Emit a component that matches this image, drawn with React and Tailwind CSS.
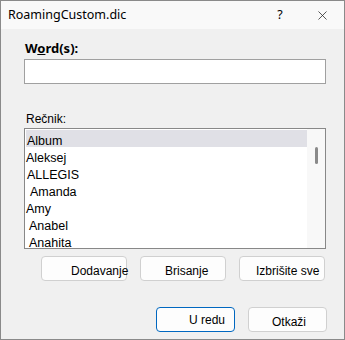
import { X } from 'lucide-react';

const words = [
  { w: 'Album', pl: 'pl-[1px]', sel: true },
  { w: 'Aleksej', pl: 'pl-[0px]' },
  { w: 'ALLEGIS', pl: 'pl-[1px]' },
  { w: 'Amanda', pl: 'pl-[4px]' },
  { w: 'Amy', pl: 'pl-[0px]' },
  { w: 'Anabel', pl: 'pl-[3px]' },
  { w: 'Anahita', pl: 'pl-[3px]' },
];

const arial = { fontFamily: '"Liberation Sans", Arial, sans-serif' };

function Btn({ children, primary, textPl, pt }) {
  return (
    <button
      className={
        'h-[25px] w-[86px] rounded-[4px] bg-[#fdfdfd] text-left text-[12px] leading-[14px] text-black whitespace-nowrap flex items-start ' +
        pt +
        ' ' +
        (primary ? 'border border-[#0067c0]' : 'border border-[#d0d0d0]')
      }
      style={arial}
    >
      <span className={textPl}>{children}</span>
    </button>
  );
}

export default function App() {
  return (
    <div
      className="w-[345px] h-[340px] border border-[#8a8a8a] bg-[#f0f0f0] flex flex-col"
      style={{ fontFamily: '"Segoe UI", "Noto Sans", "Open Sans", sans-serif' }}
    >
      {/* title bar */}
      <div className="h-[28px] bg-[#f9f9f9] flex items-center pl-[7px] text-[12.5px] text-black">
        <span className="flex-1">RoamingCustom.dic</span>
        <span className="w-[20px] text-center mr-[25px]">?</span>
        <X size={15} strokeWidth={1.2} className="mr-[14px] text-[#222]" />
      </div>

      <div className="flex flex-col pl-[23px] pr-[17px]">
        <div className="mt-[11px] text-[13px] font-bold leading-[16px] pl-[1px]">
          W<span className="underline">o</span>rd(s):
        </div>
        <div className="mt-[3px] h-[25px] w-[302px] border border-[#a0a0a0] bg-white" />

        <div className="mt-[27px] text-[12px] leading-[16px] pl-[2px]" style={arial}>
          Rečnik:
        </div>
        <div className="mt-[1px] h-[121px] w-[302px] border border-[#888] bg-white flex overflow-hidden">
          <div className="flex-1 pt-[1px] pl-[1px] flex flex-col">
            {words.map((it) => (
              <div
                key={it.w}
                className={
                  'h-[17px] shrink-0 pt-[3px] leading-[17px] text-[12.5px] text-black whitespace-nowrap ' +
                  it.pl +
                  (it.sel ? ' bg-[#e0e0e6]' : '')
                }
                style={arial}
              >
                <div className="h-[14px] overflow-visible">{it.w}</div>
              </div>
            ))}
          </div>
          <div className="w-[18px] bg-[#f8f8f8] flex justify-center pt-[18px]">
            <div className="w-[3px] h-[17px] rounded-full bg-[#8a8a8a]" />
          </div>
        </div>

        <div className="mt-[7px] flex gap-[13px] pl-[17px]">
          <Btn textPl="pl-[29px]" pt="pt-[7px]">Dodavanje</Btn>
          <Btn textPl="pl-[24px]" pt="pt-[7px]">Brisanje</Btn>
          <Btn textPl="pl-[16px]" pt="pt-[7px]">Izbrišite sve</Btn>
        </div>

        <div className="mt-[26px] flex gap-[13px] pl-[132px]">
          <Btn primary textPl="pl-[32px]" pt="pt-[5px]">U redu</Btn>
          <Btn textPl="pl-[23px]" pt="pt-[7px]">Otkaži</Btn>
        </div>
      </div>
    </div>
  );
}
